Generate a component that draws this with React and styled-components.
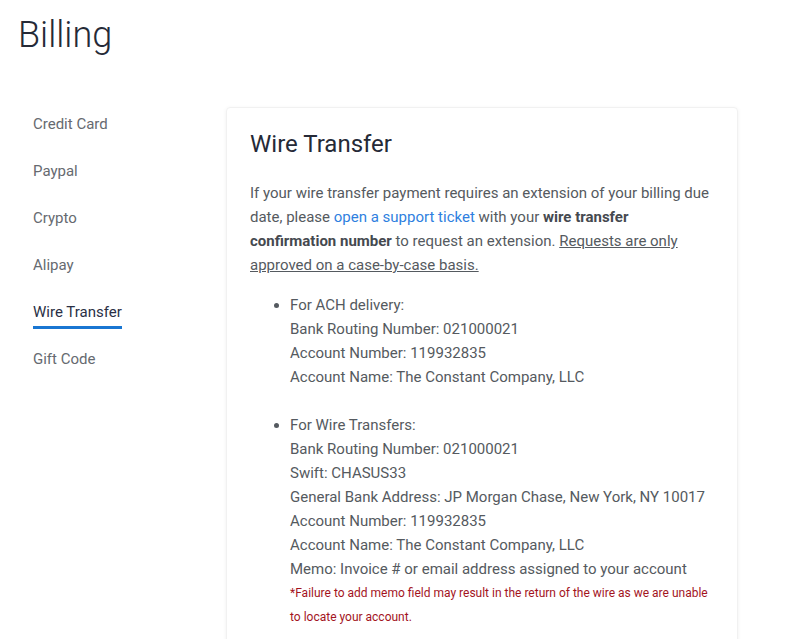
import React from 'react';
import styled, { createGlobalStyle } from 'styled-components';

const GlobalStyle = createGlobalStyle`
  body {
    margin: 0;
    background: #fff;
    font-family: Roboto, "Liberation Sans", Arial, sans-serif;
  }
`;

const Page = styled.div`
  padding: 14px 18px 0;
`;

const Title = styled.h1`
  margin: 0;
  font-size: 36px;
  line-height: 1.2;
  font-weight: 300;
  color: #252a37;
`;

const Layout = styled.div`
  display: flex;
  margin-top: 50px;
`;

const Sidebar = styled.nav`
  width: 193px;
  flex-shrink: 0;
  padding: 5px 0 0 15px;
  display: flex;
  flex-direction: column;
  align-items: flex-start;
`;

const NavItem = styled.a`
  display: block;
  font-size: 15px;
  line-height: 24px;
  color: ${p => (p.active ? '#2a2f45' : '#666a70')};
  padding-bottom: 2px;
  border-bottom: 3px solid ${p => (p.active ? '#1976d2' : 'transparent')};
  margin-bottom: 18px;
  cursor: pointer;
  text-decoration: none;
`;

const Card = styled.section`
  width: 512px;
  box-sizing: border-box;
  padding: 22px 23px 24px;
  border: 1px solid #f1f1f1;
  border-radius: 4px;
  box-shadow: 0 1px 4px rgba(0, 0, 0, 0.06);
`;

const CardTitle = styled.h2`
  margin: 0 0 22px;
  font-size: 24px;
  line-height: 1.2;
  font-weight: 400;
  color: #252a37;
`;

const Text = styled.p`
  margin: 0;
  font-size: 15px;
  line-height: 24px;
  color: #555a60;
`;

const Link = styled.a`
  color: #2f7fe0;
  text-decoration: none;
`;

const Strong = styled.strong`
  color: #45494f;
  font-weight: 700;
`;

const Underlined = styled.span`
  text-decoration: underline;
`;

const List = styled.ul`
  margin: 16px 0 0;
  padding-left: 40px;
  font-size: 15px;
  line-height: 24px;
  color: #555a60;
`;

const Item = styled.li`
  & + & {
    margin-top: 24px;
  }
`;

const Line = styled.div``;

const Note = styled.div`
  font-size: 12px;
  line-height: 24px;
  color: #a3141e;
`;

const navItems = ['Credit Card', 'Paypal', 'Crypto', 'Alipay', 'Wire Transfer', 'Gift Code'];

const ach = [
  'For ACH delivery:',
  'Bank Routing Number: 021000021',
  'Account Number: 119932835',
  'Account Name: The Constant Company, LLC'
];

const wire = [
  'For Wire Transfers:',
  'Bank Routing Number: 021000021',
  'Swift: CHASUS33',
  'General Bank Address: JP Morgan Chase, New York, NY 10017',
  'Account Number: 119932835',
  'Account Name: The Constant Company, LLC',
  'Memo: Invoice # or email address assigned to your account'
];

const App = () => (
  <Page>
    <GlobalStyle />
    <Title>Billing</Title>
    <Layout>
      <Sidebar>
        {navItems.map(name => (
          <NavItem key={name} active={name === 'Wire Transfer'}>
            {name}
          </NavItem>
        ))}
      </Sidebar>
      <Card>
        <CardTitle>Wire Transfer</CardTitle>
        <Text>
          If your wire transfer payment requires an extension of your billing due date, please{' '}
          <Link>open a support ticket</Link> with your <Strong>wire transfer confirmation number</Strong> to
          request an extension. <Underlined>Requests are only approved on a case-by-case basis.</Underlined>
        </Text>
        <List>
          <Item>
            {ach.map(l => (
              <Line key={l}>{l}</Line>
            ))}
          </Item>
          <Item>
            {wire.map(l => (
              <Line key={l}>{l}</Line>
            ))}
            <Note>
              *Failure to add memo field may result in the return of the wire as we are unable to locate your
              account.
            </Note>
          </Item>
        </List>
      </Card>
    </Layout>
  </Page>
);

export default App;
